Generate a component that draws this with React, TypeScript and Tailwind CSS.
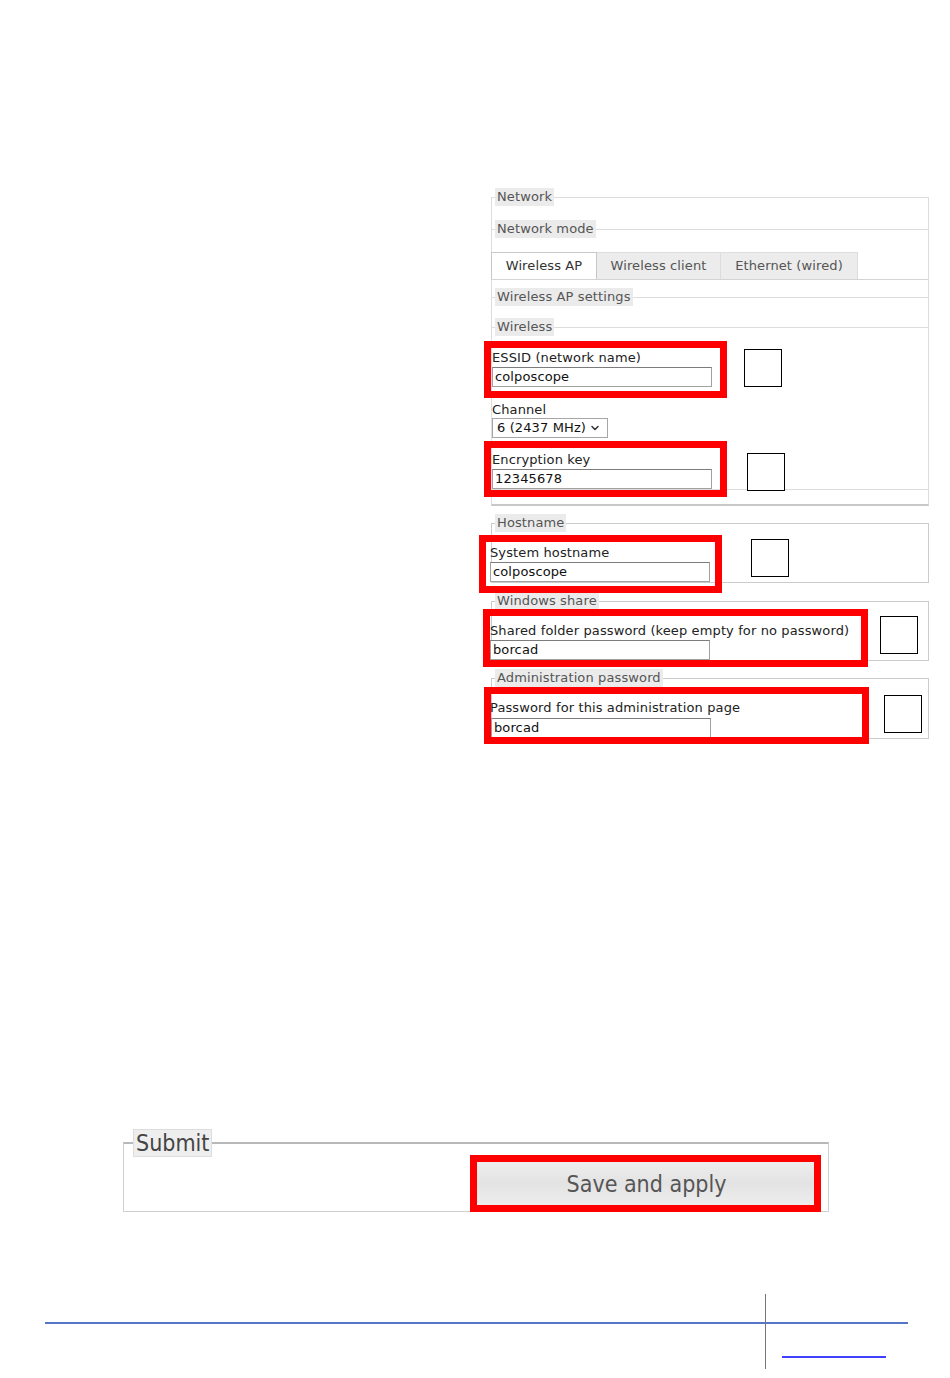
import React from 'react';
import { ChevronDown } from 'lucide-react';

function Legend({ children }: { children: React.ReactNode }) {
  return (
    <legend className="ml-[3px] px-[2px] bg-[#ebebeb] text-[#555] leading-[18px]">{children}</legend>
  );
}

function TextBox({ value }: { value: string }) {
  return (
    <div className="w-[220px] h-[20px] border border-[#a0a0a0] border-t-[#7c7c7c] bg-white pl-[2px] text-[#111] leading-[18px]">
      {value}
    </div>
  );
}

const redBoxes = [
  'left-[484px] top-[341px] w-[243px] h-[57px]',
  'left-[484px] top-[441px] w-[243px] h-[56px]',
  'left-[479px] top-[535px] w-[243px] h-[58px]',
  'left-[483px] top-[609px] w-[385px] h-[58px]',
  'left-[484px] top-[687px] w-[385px] h-[57px]',
  'left-[470px] top-[1155px] w-[351px] h-[57px]',
];

const squares = [
  'left-[744px] top-[349px]',
  'left-[747px] top-[453px]',
  'left-[751px] top-[539px]',
  'left-[880px] top-[616px]',
  'left-[884px] top-[695px]',
];

export default function App() {
  return (
    <div className="relative w-[950px] h-[1378px] bg-white overflow-hidden font-['DejaVu_Sans',sans-serif] text-[13px] tracking-[0.12px] text-[#222]">
      {/* screenshot of the settings page */}
      <div className="pt-[188px] pl-[491px]">
        <div className="w-[438px]">
          <fieldset className="min-w-0 border border-[#ddd] border-b-2 border-b-[#c8c8c8] pb-[14px]">
            <Legend>Network</Legend>

            <fieldset className="min-w-0 -mx-px mt-[14px] border border-b-0 border-[#ddd]">
              <Legend>Network mode</Legend>
              <div className="mt-[14px] flex h-[28px] border-b border-[#d4d4d4] -ml-px">
                <div className="w-[106px] bg-white border border-b-0 border-[#c8c8c8] flex items-center justify-center text-[#333]">
                  Wireless AP
                </div>
                <div className="w-[124px] bg-[#ececec] border-t border-r border-[#ddd] flex items-center justify-center text-[#555]">
                  Wireless client
                </div>
                <div className="w-[137px] bg-[#ececec] border-t border-r border-[#ddd] flex items-center justify-center text-[#555]">
                  Ethernet (wired)
                </div>
              </div>
            </fieldset>

            <fieldset className="min-w-0 -mx-px mt-[8px] border border-b-0 border-[#ddd]">
              <Legend>Wireless AP settings</Legend>
              <fieldset className="min-w-0 -mx-px mt-[12px] border border-[#ddd]">
                <Legend>Wireless</Legend>
                <div className="mt-[13px] leading-[17px]">ESSID (network name)</div>
                <div className="mt-[1px]">
                  <TextBox value="colposcope" />
                </div>
                <div className="mt-[14px] leading-[17px]">Channel</div>
                <div className="w-[116px] h-[20px] border border-[#a6a6a6] bg-white pl-[4px] pr-[6px] flex items-center justify-between text-[#111]">
                  <span>6 (2437 MHz)</span>
                  <ChevronDown size={12} strokeWidth={3} className="text-[#333]" />
                </div>
                <div className="mt-[13px] leading-[17px]">Encryption key</div>
                <div className="mt-[1px]">
                  <TextBox value="12345678" />
                </div>
              </fieldset>
            </fieldset>
          </fieldset>

          <fieldset className="min-w-0 mt-[8px] border border-[#ccc]">
            <Legend>Hostname</Legend>
            <div className="mt-[12px] -ml-[2px] leading-[17px]">System hostname</div>
            <div className="mt-[1px] -ml-[2px]">
              <TextBox value="colposcope" />
            </div>
          </fieldset>

          <fieldset className="min-w-0 mt-[9px] border border-[#ccc]">
            <Legend>Windows share</Legend>
            <div className="mt-[12px] -ml-[2px] leading-[17px]">Shared folder password (keep empty for no password)</div>
            <div className="mt-[1px] -ml-[2px]">
              <TextBox value="borcad" />
            </div>
          </fieldset>

          <fieldset className="min-w-0 mt-[8px] border border-[#ccc]">
            <Legend>Administration password</Legend>
            <div className="mt-[12px] -ml-[2px] leading-[17px]">Password for this administration page</div>
            <div className="mt-[2px] -ml-[1px]">
              <TextBox value="borcad" />
            </div>
          </fieldset>
        </div>
      </div>

      {/* submit */}
      <div className="mt-[390px] ml-[123px] w-[706px]">
        <fieldset className="min-w-0 border border-[#cfcfcf] border-t-2 border-t-[#b8b8b8] pb-[3px] font-['DejaVu_Sans_Condensed','DejaVu_Sans',sans-serif] tracking-normal">
          <legend className="ml-[9px] h-[28px] px-[2px] border border-[#ddd] bg-[#eeeeee] text-[23px] leading-[26px] text-[#444]">
            Submit
          </legend>
          <div className="mt-[3px] flex justify-end pr-[10px]">
            <div className="w-[343px] h-[48px] border border-[#d6d6d6] bg-gradient-to-b from-[#eeeeee] via-[#e3e3e3] to-[#efefef] flex items-center justify-center text-[23px] text-[#555]">
              Save and apply
            </div>
          </div>
        </fieldset>
      </div>

      {/* page footer */}
      <div className="mt-[82px] ml-[45px] flex">
        <div className="w-[720px] pt-[28px]">
          <div className="h-[2px] bg-[#5576c8]" />
        </div>
        <div className="w-[143px] h-[75px] border-l border-[#777] pt-[28px]">
          <div className="h-[2px] bg-[#5576c8]" />
          <div className="mt-[32px] ml-[16px] w-[104px] h-[2px] bg-[#4040ff]" />
        </div>
      </div>

      {/* annotations drawn over the screenshot */}
      {redBoxes.map((c, i) => (
        <div key={i} className={`absolute border-[7px] border-[#ff0000] ${c}`} />
      ))}
      {squares.map((c, i) => (
        <div key={i} className={`absolute w-[38px] h-[38px] border border-black bg-white ${c}`} />
      ))}
    </div>
  );
}
